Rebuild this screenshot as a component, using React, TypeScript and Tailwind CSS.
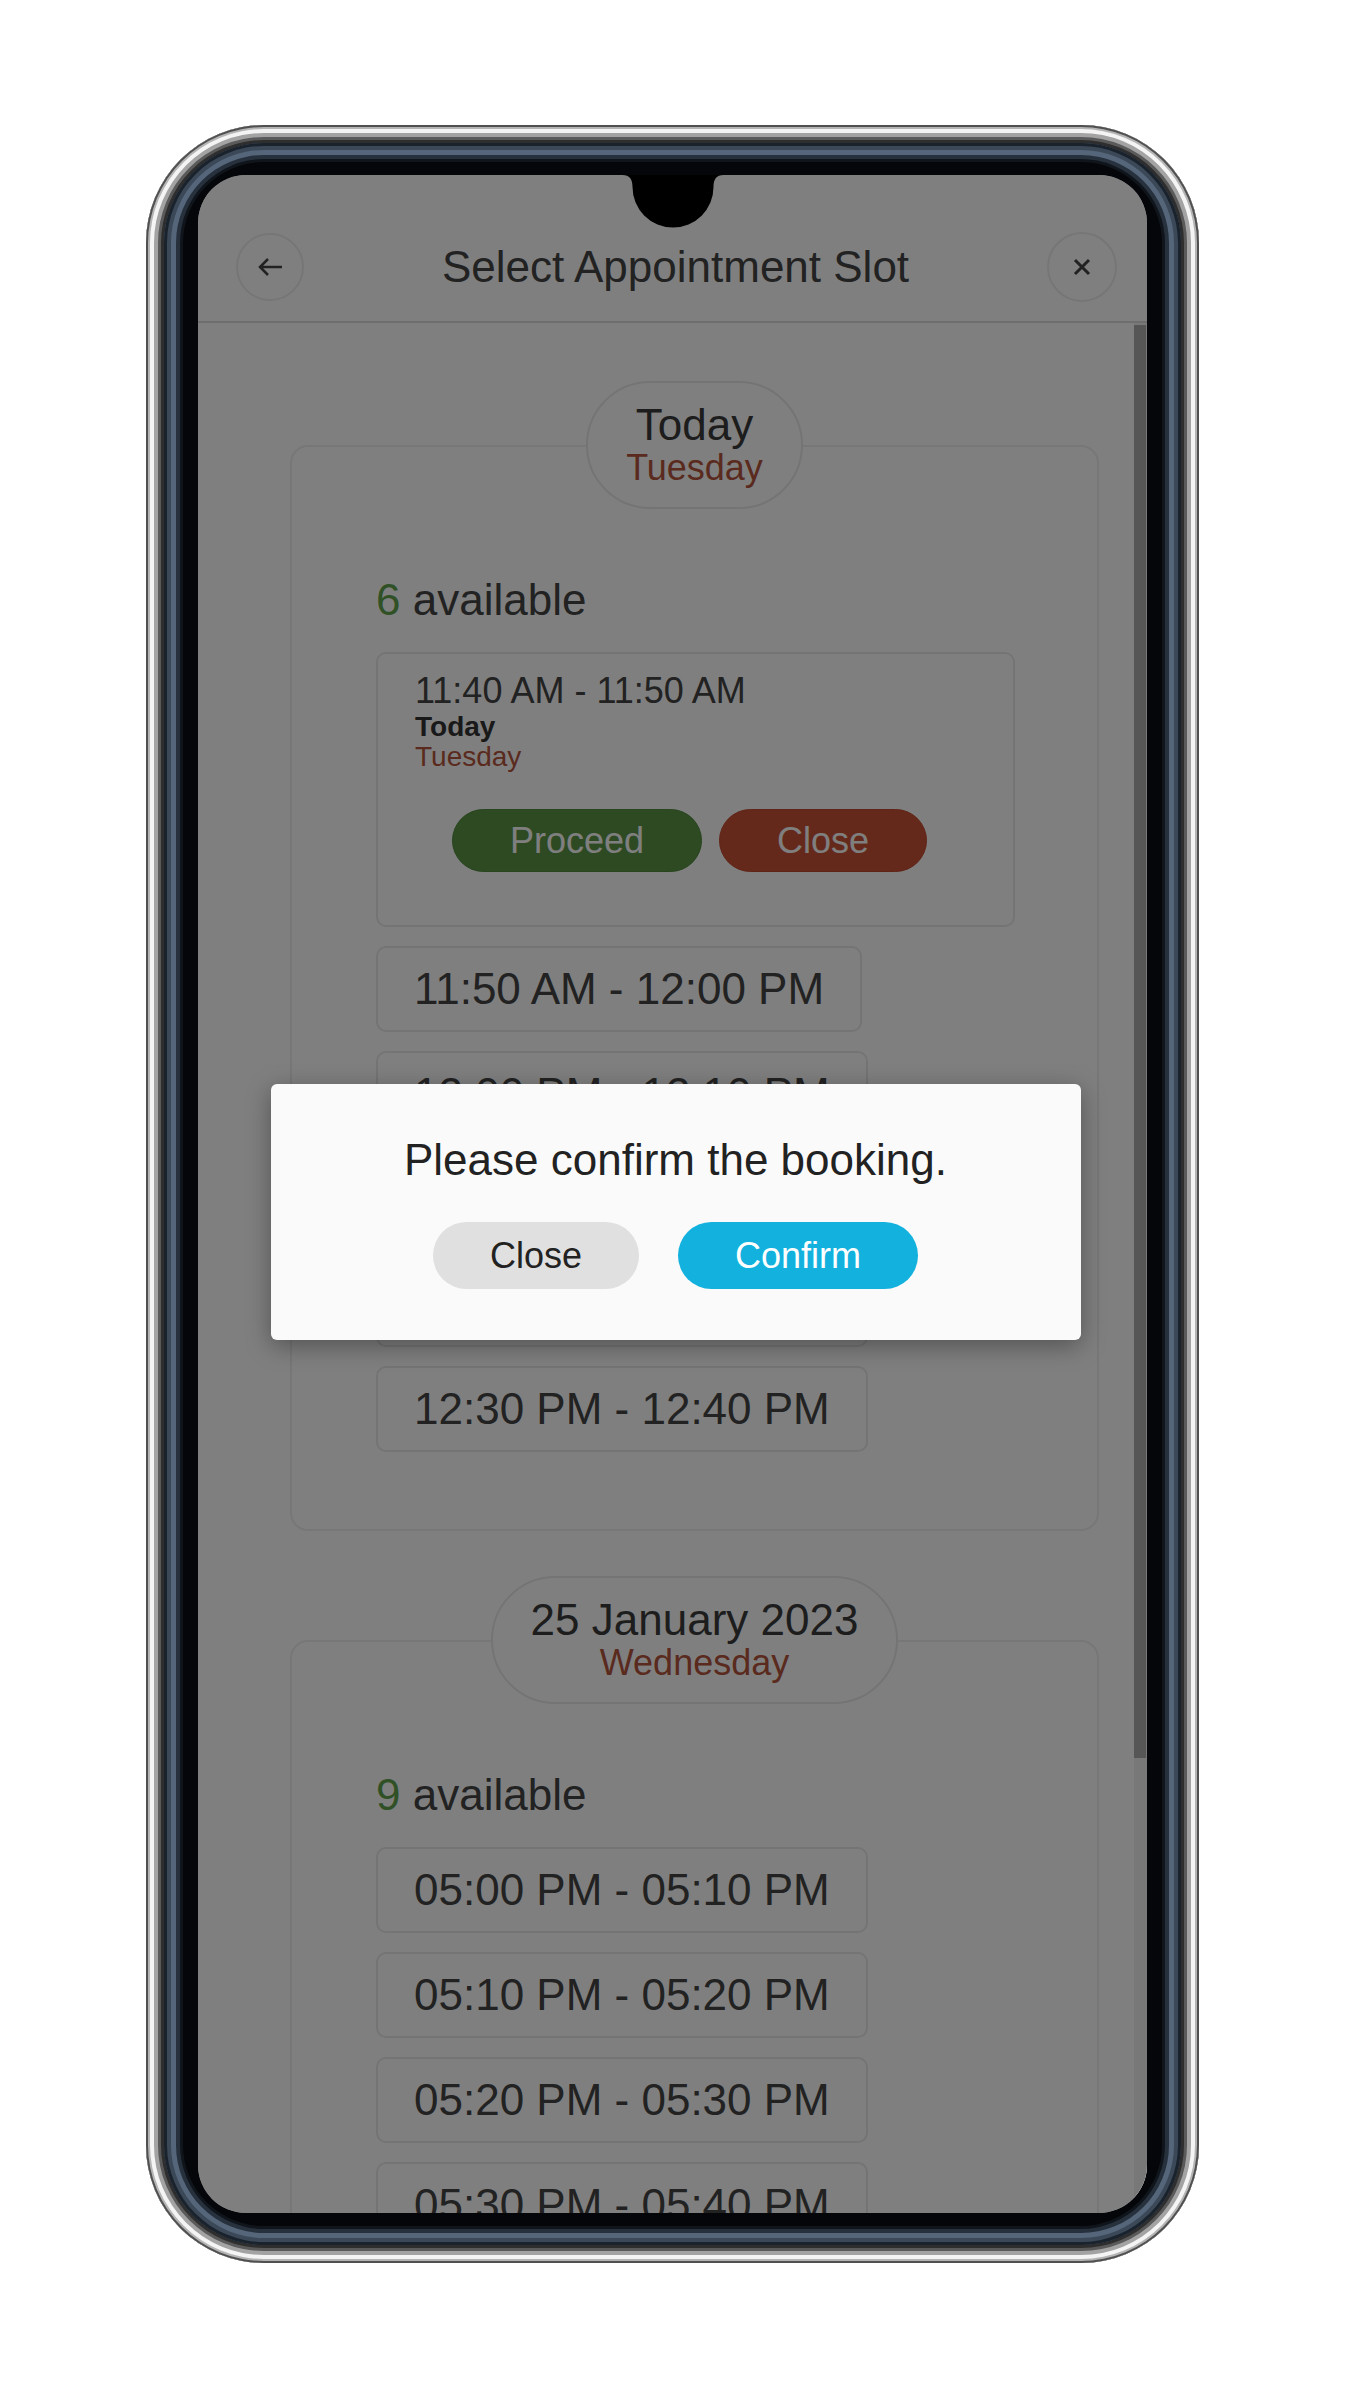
import React from "react";

type Selected = { range: string; title: string; weekday: string };
type Day = { title: string; weekday: string; count: number; selected?: Selected; slots: string[] };

const days: Day[] = [
    {
        title: "Today",
        weekday: "Tuesday",
        count: 6,
        selected: { range: "11:40 AM - 11:50 AM", title: "Today", weekday: "Tuesday" },
        slots: [
            "11:50 AM - 12:00 PM",
            "12:00 PM - 12:10 PM",
            "12:10 PM - 12:20 PM",
            "12:20 PM - 12:30 PM",
            "12:30 PM - 12:40 PM",
        ],
    },
    {
        title: "25 January 2023",
        weekday: "Wednesday",
        count: 9,
        slots: [
            "05:00 PM - 05:10 PM",
            "05:10 PM - 05:20 PM",
            "05:20 PM - 05:30 PM",
            "05:30 PM - 05:40 PM",
            "05:40 PM - 05:50 PM",
            "05:50 PM - 06:00 PM",
        ],
    },
];

const Notch = () => (
    <svg className="absolute left-1/2 top-0 z-30 -translate-x-1/2" width="101" height="53" viewBox="0 0 101 53">
        <path d="M0 0 H101 C94 0 91 4 91 12 A40.5 40.5 0 0 1 10 12 C10 4 7 0 0 0 Z" fill="#000" />
    </svg>
);

const SelectedSlot = ({ s }: { s: Selected }) => (
    <div className="w-[639px] rounded-[10px] border-2 border-[#e9e9e9] pb-[53px] pl-[37px] pt-[15px]">
        <p className="text-[36px] leading-[43px] text-[#444]">{s.range}</p>
        <p className="text-[28px] font-bold leading-[30px] text-[#333]">{s.title}</p>
        <p className="text-[28px] leading-[30px] text-[#b4553d]">{s.weekday}</p>
        <div className="ml-[37px] mt-[37px] flex gap-[17px]">
            <button className="h-[63px] rounded-full border border-[#4f8a3c] bg-[#5b9446] px-[57px] text-[36px] text-white">Proceed</button>
            <button className="h-[63px] rounded-full border border-[#c04a30] bg-[#cb5237] px-[57px] text-[36px] text-white">Close</button>
        </div>
    </div>
);

const DaySection = ({ day }: { day: Day }) => (
    <section className="flex flex-col items-center">
        <div className="relative z-10 flex h-[128px] flex-col items-center justify-center rounded-full border-2 border-[#e9e9e9] bg-white px-[38px]">
            <span className="text-[44px] leading-[46px] text-[#3a3a3a]">{day.title}</span>
            <span className="text-[36px] leading-[40px] text-[#b4553d]">{day.weekday}</span>
        </div>
        <div className="-mt-[64px] w-full rounded-[18px] border-2 border-[#eeeeee] pb-[77px] pl-[84px] pt-[128px]">
            <p className="h-[50px] text-[44px] leading-[50px] text-[#444]">
                <span className="text-[#5fa34a]">{day.count}</span> available
            </p>
            <div className="mt-[27px] flex flex-col items-start gap-[19px]">
                {day.selected && <SelectedSlot s={day.selected} />}
                {day.slots.map((t) => (
                    <div
                        key={t}
                        className="flex h-[86px] items-center rounded-[10px] border-2 border-[#e9e9e9] px-[36px] text-[44px] leading-none text-[#444]"
                    >
                        {t}
                    </div>
                ))}
            </div>
        </div>
    </section>
);

export default function App() {
    return (
        <div className="flex min-h-[2388px] w-full justify-center bg-white pt-[125px] font-['Liberation_Sans',Arial,sans-serif]">
            {/* phone frame */}
            <div className="h-[2138px] w-[1053px] rounded-[118px] bg-[#2e2e2e] p-[18px] shadow-[inset_0_0_0_2px_#505050,inset_0_0_0_4px_#b4b4b4,inset_0_0_0_8px_#f4f4f4,inset_0_0_0_12px_#a3a3a3,inset_0_0_0_15px_#5a5a5a]">
                <div className="h-full rounded-[100px] bg-[#04060a] px-[34px] py-[32px] shadow-[inset_0_0_0_3px_#1a222c,inset_0_0_0_7px_#3b4858,inset_0_0_0_12px_#56667a,inset_0_0_0_16px_#27313d,inset_0_0_0_19px_#10151b]">
                    <div className="relative flex h-full flex-col overflow-hidden rounded-[48px] bg-white">
                        <Notch />
                        <header className="flex h-[148px] shrink-0 items-center justify-between border-b-2 border-[#dcdcdc] pl-[38px] pr-[30px] pt-[38px]">
                            <button className="flex h-[68px] w-[68px] items-center justify-center rounded-full border-2 border-[#ececec]">
                                <svg width="26" height="20" viewBox="0 0 26 20" fill="none" stroke="#444" strokeWidth="2.5">
                                    <path d="M25 10 H3 M11 2 L3 10 L11 18" />
                                </svg>
                            </button>
                            <h1 className="text-[44px] leading-none text-[#444]">Select Appointment Slot</h1>
                            <button className="flex h-[70px] w-[70px] items-center justify-center rounded-full border-2 border-[#ececec]">
                                <svg width="18" height="18" viewBox="0 0 18 18" fill="none" stroke="#444" strokeWidth="3">
                                    <path d="M2 2 L16 16 M16 2 L2 16" />
                                </svg>
                            </button>
                        </header>
                        <div className="flex min-h-0 flex-1">
                            <div className="min-w-0 flex-1 overflow-hidden pt-[58px]">
                                <div className="ml-[92px] flex w-[809px] flex-col gap-[45px]">
                                    {days.map((d) => (
                                        <DaySection key={d.title} day={d} />
                                    ))}
                                </div>
                            </div>
                            <div className="w-[13px] shrink-0 bg-[#f1f1f1] pt-[2px]">
                                <div className="h-[1433px] w-[12px] bg-[#acacac]" />
                            </div>
                        </div>
                        {/* dim overlay + confirm dialog */}
                        <div className="absolute inset-0 z-20 flex items-start justify-center bg-black/50 pl-[6px] pt-[909px]">
                            <div className="flex w-[810px] flex-col items-center rounded-[6px] bg-[#fafafa] pb-[51px] pt-[51px] shadow-[0_6px_24px_rgba(0,0,0,0.35)]">
                                <p className="text-[44px] leading-[50px] text-[#222]">Please confirm the booking.</p>
                                <div className="mt-[37px] flex gap-[39px]">
                                    <button className="h-[67px] rounded-full bg-[#e0e0e0] px-[57px] text-[36px] text-[#222]">Close</button>
                                    <button className="h-[67px] rounded-full bg-[#13b1de] px-[57px] text-[36px] text-white">Confirm</button>
                                </div>
                            </div>
                        </div>
                    </div>
                </div>
            </div>
        </div>
    );
}
